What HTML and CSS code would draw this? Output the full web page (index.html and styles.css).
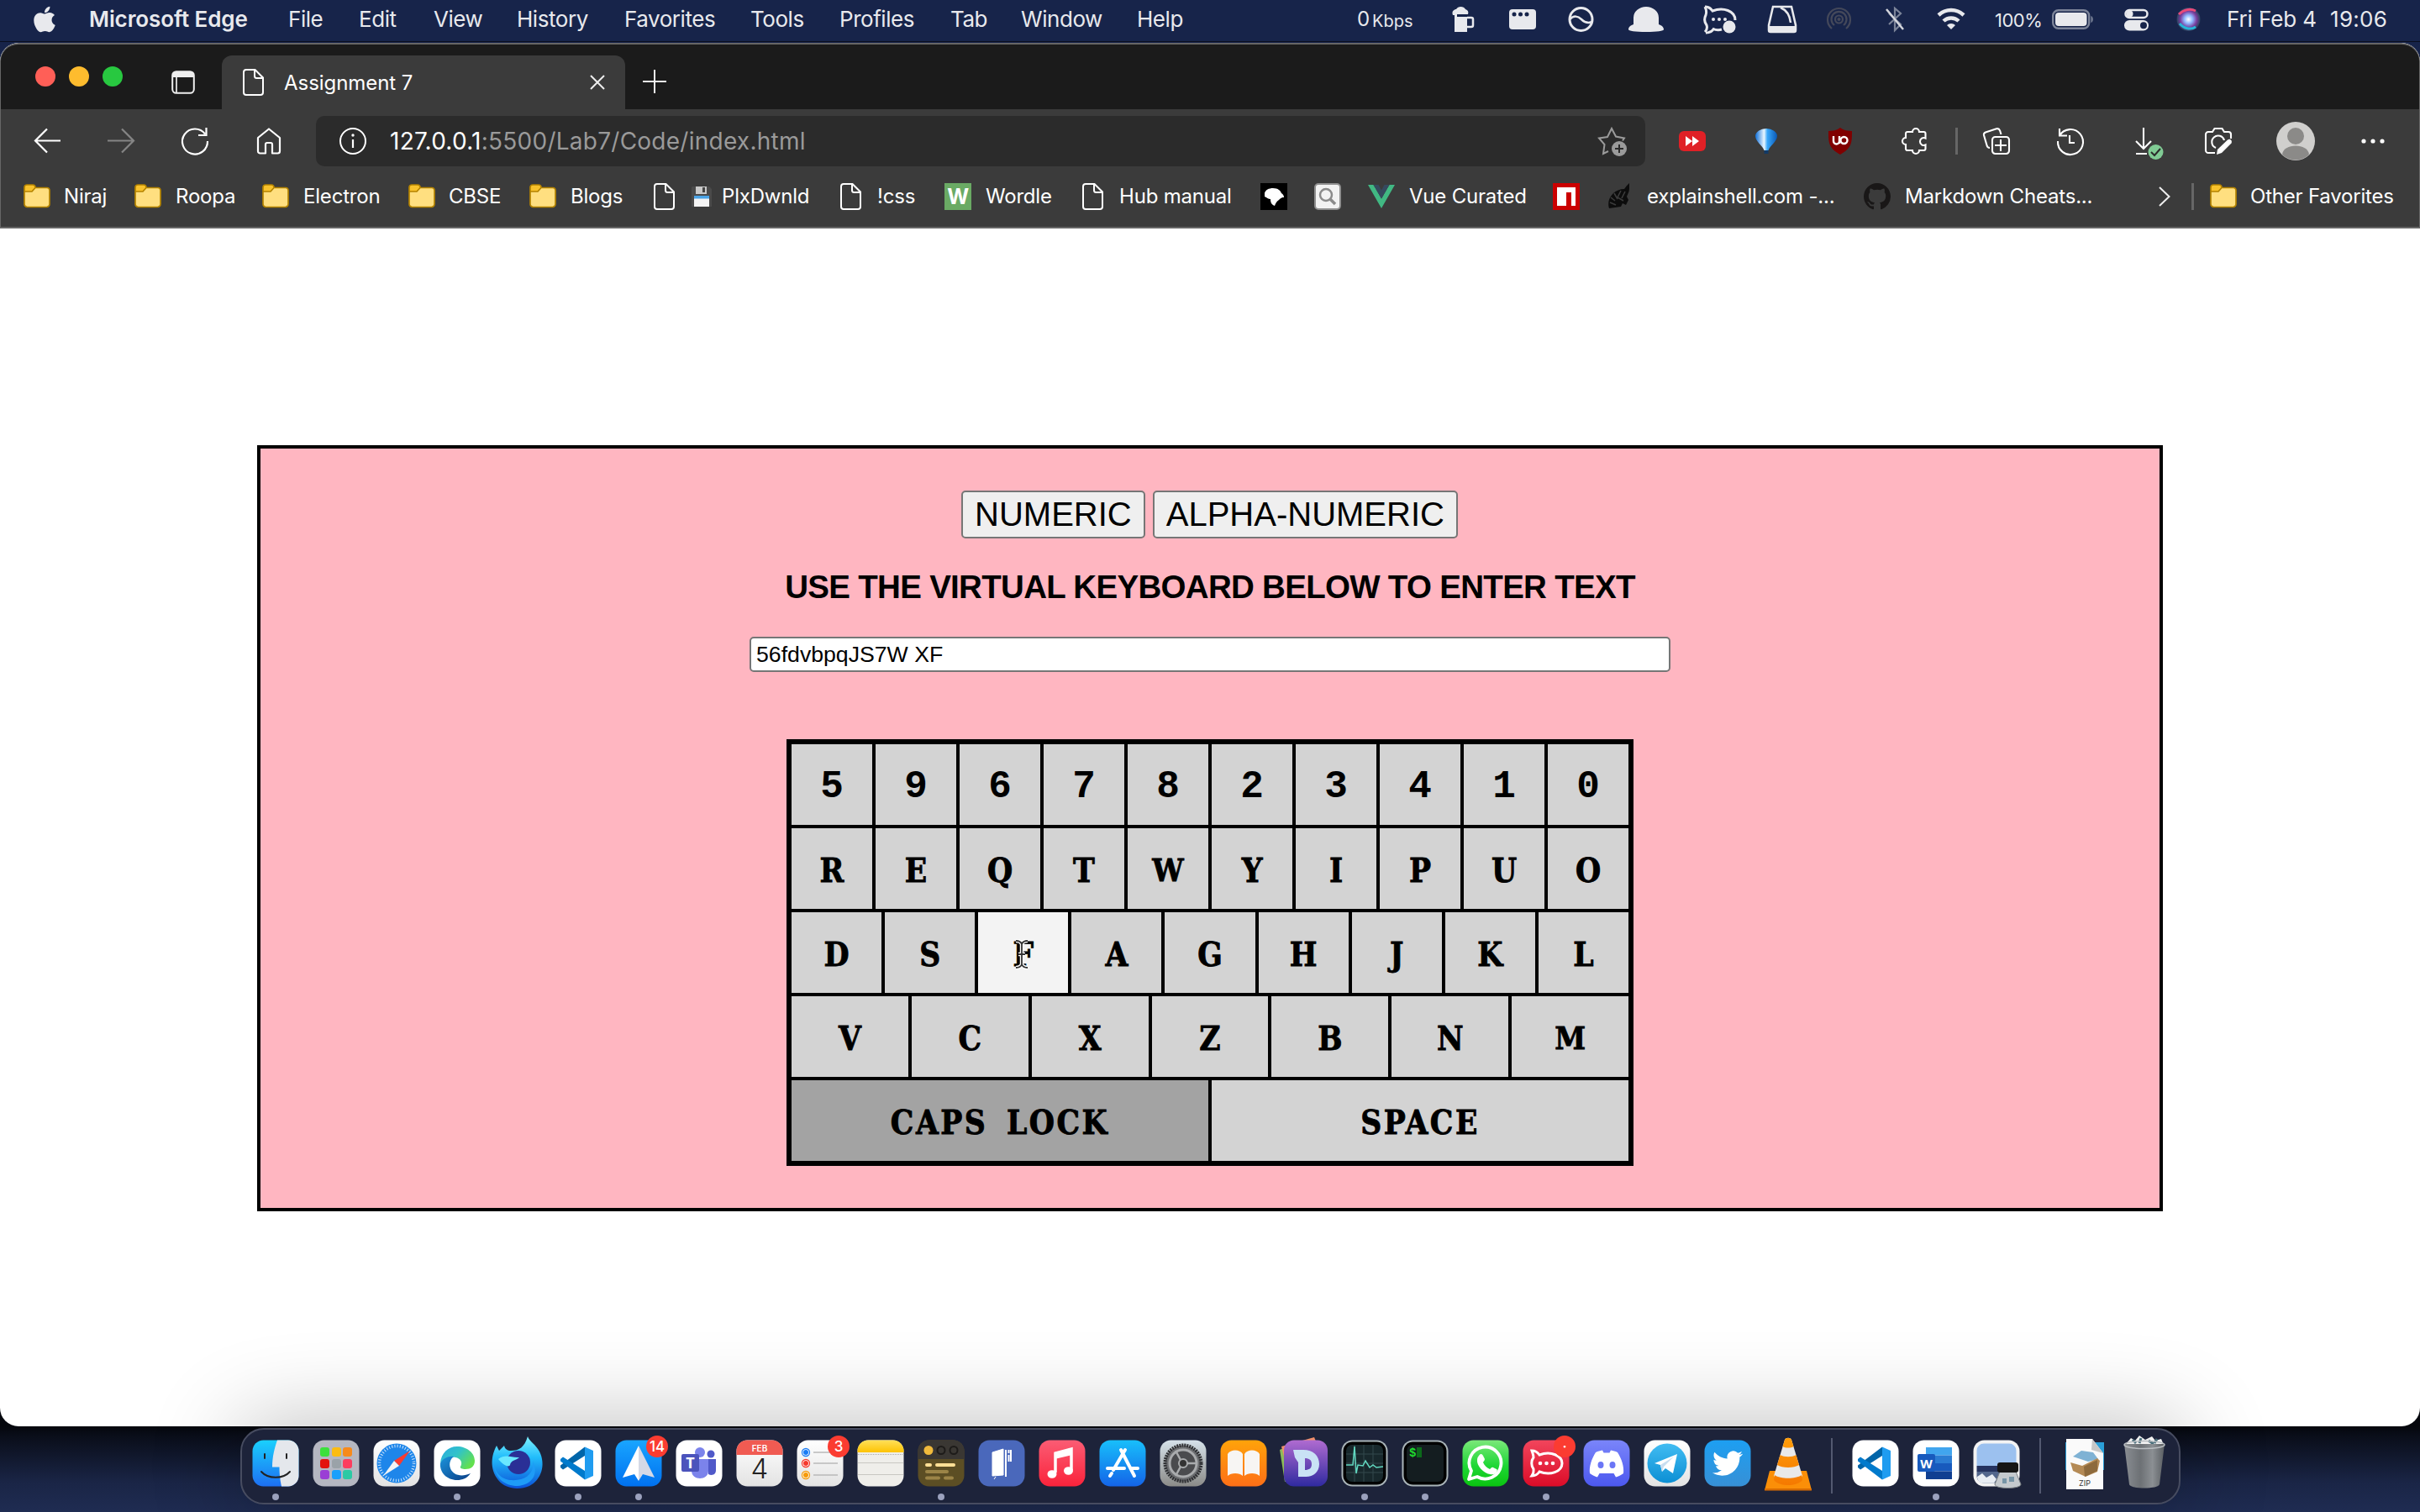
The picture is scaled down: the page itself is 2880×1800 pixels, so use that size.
FILE: index.html
```html
<!DOCTYPE html>
<html lang="en">
<head>
<meta charset="utf-8">
<title>Assignment 7</title>
<link rel="stylesheet" href="styles.css">
</head>
<body>
<svg class="defs" aria-hidden="true">
  <defs>
    <linearGradient id="gBlue" x1="0" y1="0" x2="0" y2="1"><stop offset="0" stop-color="#1ad0fd"/><stop offset="1" stop-color="#1d6ff2"/></linearGradient>
    <linearGradient id="gWhite" x1="0" y1="0" x2="0" y2="1"><stop offset="0" stop-color="#fff"/><stop offset="1" stop-color="#e3e3e3"/></linearGradient>
    <linearGradient id="gSky" x1="0" y1="0" x2="0" y2="1"><stop offset="0" stop-color="#19a5ff"/><stop offset="1" stop-color="#0071f0"/></linearGradient>
    <linearGradient id="gStore" x1="0" y1="0" x2="0" y2="1"><stop offset="0" stop-color="#18bffb"/><stop offset="1" stop-color="#1464e8"/></linearGradient>
    <linearGradient id="gMusic" x1="0" y1="0" x2="0" y2="1"><stop offset="0" stop-color="#fb5c74"/><stop offset="1" stop-color="#fa233b"/></linearGradient>
    <linearGradient id="gBooks" x1="0" y1="0" x2="0" y2="1"><stop offset="0" stop-color="#ffa30a"/><stop offset="1" stop-color="#fd6f17"/></linearGradient>
    <linearGradient id="gDash" x1="0" y1="0" x2="0" y2="1"><stop offset="0" stop-color="#b06bd0"/><stop offset="1" stop-color="#2f2aa0"/></linearGradient>
    <linearGradient id="gGreen" x1="0" y1="0" x2="0" y2="1"><stop offset="0" stop-color="#7be87a"/><stop offset=".55" stop-color="#1fd736"/><stop offset="1" stop-color="#0ac410"/></linearGradient>
    <linearGradient id="gRed" x1="0" y1="0" x2="0" y2="1"><stop offset="0" stop-color="#f2455c"/><stop offset="1" stop-color="#db0c28"/></linearGradient>
    <linearGradient id="gDisc" x1="0" y1="0" x2="0" y2="1"><stop offset="0" stop-color="#7a85fa"/><stop offset="1" stop-color="#4c58ef"/></linearGradient>
    <linearGradient id="gTele" x1="0" y1="0" x2="0" y2="1"><stop offset="0" stop-color="#41bcf2"/><stop offset="1" stop-color="#0c8fd4"/></linearGradient>
    <linearGradient id="gTw" x1="0" y1="0" x2="0" y2="1"><stop offset="0" stop-color="#1d9ff2"/><stop offset="1" stop-color="#3790d6"/></linearGradient>
    <linearGradient id="gNote" x1="0" y1="0" x2="0" y2="1"><stop offset="0" stop-color="#ffe05a"/><stop offset="1" stop-color="#fdc302"/></linearGradient>
    <linearGradient id="gGray" x1="0" y1="0" x2="0" y2="1"><stop offset="0" stop-color="#d6e2ea"/><stop offset="1" stop-color="#8b8b88"/></linearGradient>
    <linearGradient id="gEdge" x1="0" y1="0" x2="1" y2=".6"><stop offset="0" stop-color="#2aa9e0"/><stop offset=".5" stop-color="#31c3c9"/><stop offset="1" stop-color="#63e04e"/></linearGradient>
    <linearGradient id="gEdge2" x1="0" y1="0" x2="1" y2="1"><stop offset="0" stop-color="#1b93dc"/><stop offset="1" stop-color="#0b3f86"/></linearGradient>
    <linearGradient id="gFox" x1="0" y1="0" x2="0" y2="1"><stop offset="0" stop-color="#7ff2ff"/><stop offset=".4" stop-color="#22bdfb"/><stop offset="1" stop-color="#0b52d8"/></linearGradient>
    <linearGradient id="gCone" x1="0" y1="0" x2="0" y2="1"><stop offset="0" stop-color="#ff9d0a"/><stop offset="1" stop-color="#f57900"/></linearGradient>
    <linearGradient id="gBin" x1="0" y1="0" x2="1" y2="0"><stop offset="0" stop-color="#8a8e93"/><stop offset=".4" stop-color="#6d7175"/><stop offset=".7" stop-color="#8b8f93"/><stop offset="1" stop-color="#5a5e62"/></linearGradient>
    <radialGradient id="gSiri"><stop offset="0" stop-color="#fff"/><stop offset=".35" stop-color="#8fb9ff"/><stop offset=".7" stop-color="#7a3c9c"/><stop offset="1" stop-color="#27455f"/></radialGradient>
    <linearGradient id="gBall" x1="0" y1="0" x2="1" y2="0"><stop offset="0" stop-color="#0f6fd8"/><stop offset=".4" stop-color="#e9f6ff"/><stop offset=".55" stop-color="#39a8fb"/><stop offset="1" stop-color="#0a58b5"/></linearGradient>
    <symbol id="tile" viewBox="0 0 56 56"><rect x=".5" y=".5" width="55" height="55" rx="13"/></symbol>
    <symbol id="folder" viewBox="0 0 32 32"><path d="M1 5a3 3 0 0 1 3-3h7a3 3 0 0 1 3 3v3l-3 3H1z" fill="#f8c22c"/><path d="M1 10h9l4-4.500h14a3 3 0 0 1 3 3V25a3.500 3.500 0 0 1-3.500 3.500h-23A3.500 3.500 0 0 1 1 25z" fill="#ffdf80"/><path d="M1 5a3 3 0 0 1 3-3h7a3 3 0 0 1 3 3.500h14a3 3 0 0 1 3 3V25a3.500 3.500 0 0 1-3.500 3.500h-23A3.500 3.500 0 0 1 1 25zM1.500 10h8.500l4-4.500" fill="none" stroke="#b48300" stroke-width="1.700"/></symbol>
    <symbol id="file" viewBox="0 0 32 32"><path d="M4 1h10.500L24 10.500V28a3 3 0 0 1-3 3H4a3 3 0 0 1-3-3V4a3 3 0 0 1 3-3zM14 1v7.500a2.500 2.500 0 0 0 2.500 2.500H24" fill="none" stroke="#fff" stroke-width="2"/></symbol>
    <symbol id="vsc" viewBox="0 0 56 56"><use href="#tile" fill="#fff"/><path d="M10 35.500L7 33v-2.500L36 8.500V19z" fill="#0065a9"/><path d="M10 20.500L7 23v2.500L36 47.500V37z" fill="#007acc"/><path d="M36 8.500l10 4.500v30l-10 4.500z" fill="#1f9cf0"/></symbol>
  </defs>
</svg>

<header class="menubar">
  <svg class="m-apple" viewBox="0 24 384 464"><path d="M318.700 268.700c-.2-36.700 16.400-64.400 50-84.800-18.800-26.900-47.200-41.700-84.700-44.600-35.500-2.800-74.300 20.700-88.500 20.700-15 0-49.400-19.700-76.400-19.700C63.300 141.200 4 184.800 4 273.500q0 39.300 14.400 81.200c12.800 36.700 59 126.700 107.200 125.200 25.200-.6 43-17.900 75.800-17.900 31.800 0 48.300 17.900 76.400 17.900 48.600-.7 90.400-82.500 102.600-119.300-65.200-30.700-61.700-90-61.700-91.900zm-56.600-164.200c27.300-32.400 24.800-61.900 24-72.500-24.100 1.400-52 16.400-67.900 34.900-17.500 19.800-27.800 44.300-25.600 71.900 26.100 2 49.900-11.400 69.500-34.300z" fill="#e8e9ed"/></svg>
  <b>Microsoft Edge</b><span>File</span><span>Edit</span><span>View</span><span>History</span><span>Favorites</span><span>Tools</span><span>Profiles</span><span>Tab</span><span>Window</span><span>Help</span>
  <span class="zero">0</span><span class="kbps">Kbps</span>
  <svg class="mi" viewBox="0 0 32 32"><path d="M1 11C-1 6 3 4 5 4c2-4 9-4 11 0 3 1 4 3 3 6H6v5H3v-4zM3 13h15v18H3z" fill="#e8e9ed"/><path d="M18 14h5a2 2 0 0 1 2 2v7a2 2 0 0 1-2 2h-5" fill="none" stroke="#e8e9ed" stroke-width="2.500"/></svg>
  <svg class="mi" viewBox="0 0 32 32"><rect y="4" width="32" height="24" rx="4" fill="#e8e9ed"/><g fill="#17244a"><circle cx="6" cy="10" r="2.500"/><circle cx="13.500" cy="10" r="2.500"/><circle cx="21" cy="10" r="2.500"/></g></svg>
  <svg class="mi" viewBox="0 0 32 32"><circle cx="15.500" cy="16" r="13.500" fill="none" stroke="#e8e9ed" stroke-width="3"/><path d="M2 16c5-5 10-4 14 0s8 5 13 3" fill="none" stroke="#e8e9ed" stroke-width="2.500"/></svg>
  <svg class="mi mi-wide" viewBox="0 0 42 32"><path d="M6 22V14a15 13 0 0 1 30 0v8c3 1 6 3 6 6 0 2-8 3-21 3S0 30 0 28c0-3 3-5 6-6z" fill="#e8e9ed"/></svg>
  <svg class="mi mi-wide" viewBox="0 0 42 32"><path d="M3 1c4 0 7 2 9 5 13-5 27 0 27 11M4 32c3 0 7-1 9-4M3 1c2 4 2 7 1 10-2 4-2 8 1 12 1 3 0 6-2 8" fill="none" stroke="#e8e9ed" stroke-width="3"/><path d="M12 27c4 2 8 2 11 1" stroke="#e8e9ed" stroke-width="3" fill="none"/><g fill="#e8e9ed"><circle cx="13" cy="16" r="2"/><circle cx="20" cy="16" r="2"/><circle cx="27" cy="16" r="2"/><circle cx="32" cy="25" r="7.500"/></g></svg>
  <svg class="mi mi-wide" viewBox="0 0 42 32"><path d="M6 1h22l5 22v6a2 2 0 0 1-2 2H3a2 2 0 0 1-2-2v-6z" fill="none" stroke="#e8e9ed" stroke-width="2.500"/><path d="M1 24h32v5a2 2 0 0 1-2 2H3a2 2 0 0 1-2-2z" fill="#e8e9ed"/><path d="M15 2c7 3 11 8 12 18" fill="none" stroke="#e8e9ed" stroke-width="2.500"/></svg>
  <svg class="mi" viewBox="0 0 32 32"><g fill="none" stroke="#44485a" stroke-width="2.200"><path d="M6 27a13.500 13.500 0 1 1 17 0"/><path d="M9 23a9 9 0 1 1 11 0"/><circle cx="14.500" cy="16" r="4.500"/></g><circle cx="14.500" cy="16" r="2" fill="#44485a"/></svg>
  <svg class="mi" viewBox="0 0 32 32"><path d="M5 9l14 13-7 7V3l7 6L5 22" fill="none" stroke="#7c8499" stroke-width="2.200"/><path d="M2 4l20 24" stroke="#d4d6dd" stroke-width="2.500"/></svg>
  <svg class="mi mi-wide" viewBox="0 0 42 32"><g fill="none" stroke="#e8e9ed" stroke-width="4.500"><path d="M2 11a22 22 0 0 1 30 0"/><path d="M8 18a13 13 0 0 1 18 0"/></g><path d="M12 23a7 7 0 0 1 10 0l-5 5z" fill="#e8e9ed"/></svg>
  <span class="pct">100%</span>
  <svg class="mi-batt" viewBox="0 0 50 32"><rect x="1.200" y="5.200" width="43" height="21.600" rx="6.500" fill="none" stroke="#7c8499" stroke-width="2.400"/><rect x="4" y="8" width="37.500" height="16" rx="4" fill="#e8e9ed"/><path d="M46.500 12c3 1 3 7 0 8z" fill="#7c8499"/></svg>
  <svg class="mi" viewBox="0 0 32 32"><rect x="1.500" y="5" width="26" height="9" rx="4.500" fill="none" stroke="#e8e9ed" stroke-width="2.500"/><circle cx="6.500" cy="9.500" r="4" fill="#e8e9ed"/><rect x="0" y="17" width="29" height="12.500" rx="6.200" fill="#e8e9ed"/><circle cx="23" cy="23.300" r="4" fill="#17244a"/></svg>
  <svg class="mi" viewBox="0 0 32 32"><circle cx="14.500" cy="16" r="14" fill="url(#gSiri)"/><path d="M3 10c6-6 14-7 20-4" stroke="#e84a7a" stroke-width="3" fill="none"/><path d="M4 21c5 6 13 8 19 4" stroke="#27b6d8" stroke-width="3" fill="none"/></svg>
  <span class="date">Fri Feb 4</span><span class="date clock">19:06</span>
</header>

<main class="window">
  <section class="chrome">
    <div class="tabstrip">
      <div class="lights"><i class="red"></i><i class="yellow"></i><i class="green"></i></div>
      <svg class="tabmenu" viewBox="0 0 28 28"><rect x="1.200" y="1.200" width="25.600" height="25.600" rx="4.500" fill="none" stroke="#eee" stroke-width="2"/><path d="M1 8V5.500A4.500 4.500 0 0 1 5.500 1h17A4.500 4.500 0 0 1 27 5.500V8z" fill="#eee"/><path d="M6 8v19" stroke="#eee" stroke-width="1.700"/></svg>
      <div class="tab">
        <svg class="ic" viewBox="0 0 32 32"><use href="#file"/></svg>
        <span>Assignment 7</span>
        <svg class="close" viewBox="0 0 18 18"><path d="M1 1l16 16M17 1L1 17" stroke="#eee" stroke-width="2"/></svg>
      </div>
      <svg class="plus" viewBox="0 0 28 28"><path d="M14 0v28M0 14h28" stroke="#f2f2f2" stroke-width="2"/></svg>
    </div>
    <div class="toolbar">
      <svg class="ic" viewBox="0 0 32 32"><path d="M32 15.500H2M16 1.500l-14 14 14 14" fill="none" stroke="#fff" stroke-width="2.200"/></svg>
      <svg class="ic" viewBox="0 0 32 32"><path d="M0 15.500h31M17 1.500l14 14-14 14" fill="none" stroke="#858585" stroke-width="2.200"/></svg>
      <svg class="ic" viewBox="0 0 32 32"><path d="M31 16A15 15 0 1 1 28 7.500M29.500 0v9H20" fill="none" stroke="#fff" stroke-width="2.200"/></svg>
      <svg class="ic" viewBox="0 0 32 32"><path d="M3 12L16 1.500 29 12v16a2.500 2.500 0 0 1-2.500 2.500H20V20a2 2 0 0 0-2-2h-4a2 2 0 0 0-2 2v10.500H5.500A2.500 2.500 0 0 1 3 28z" fill="none" stroke="#fff" stroke-width="2.200" stroke-linejoin="round"/></svg>
      <div class="url">
        <svg class="ic" viewBox="0 0 32 32"><circle cx="16" cy="16" r="15" fill="none" stroke="#fff" stroke-width="2"/><path d="M16 14v10" stroke="#fff" stroke-width="2.200"/><circle cx="16" cy="9" r="1.700" fill="#fff"/></svg>
        <span class="addr"><em>127.0.0.1</em>:5500/Lab7/Code/index.html</span>
        <svg class="ic star" viewBox="0 0 32 32"><path d="M12 28l-6 3 1.500-11L1 12.500l10-1.500L16 1l5 9.500 10 2-2 3" fill="none" stroke="#9a9a9a" stroke-width="2"/><circle cx="25" cy="25" r="9" fill="#9a9a9a"/><path d="M25 20v10M20 25h10" stroke="#2b2b2b" stroke-width="2"/></svg>
      </div>
      <svg class="ic" viewBox="0 0 32 32"><rect y="4" width="32" height="24" rx="6" fill="#e02026"/><path d="M8 10l8 6-8 6zM16 10l8 6-8 6z" fill="#fff"/></svg>
      <svg class="ic" viewBox="0 0 32 32"><path d="M3 10a13 9 0 0 1 26 0c0 6-9 12-10.500 17h-5C12 22 3 16 3 10z" fill="url(#gBall)"/><rect x="13.500" y="27" width="5" height="4" fill="#123a66"/></svg>
      <svg class="ic" viewBox="0 0 32 32"><path d="M16 0c4 3 9 4 14 4 0 14 0 20-14 28C2 24 2 18 2 4c5 0 10-1 14-4z" fill="#800000"/><path d="M8 10v6a3.500 3.500 0 0 0 7 0v-6m0 6v3" stroke="#fff" stroke-width="2.400" fill="none"/><circle cx="20.500" cy="15" r="4" stroke="#fff" stroke-width="2.400" fill="none"/></svg>
      <svg class="ic" viewBox="0 0 32 32"><path d="M4 7a2 2 0 0 1 2-2h6a4 4 0 1 1 8 0h5.500a2 2 0 0 1 2 2v5.500a4.500 4.500 0 1 0 0 8V25a2 2 0 0 1-2 2H20a4 4 0 1 1-8 0H6a2 2 0 0 1-2-2v-5a4 4 0 1 1 0-8z" fill="none" stroke="#fff" stroke-width="2.100"/></svg>
      <i class="sep"></i>
      <svg class="ic" viewBox="0 0 32 32"><rect x="11" y="11" width="20" height="20" rx="3.500" fill="none" stroke="#fff" stroke-width="2.100"/><path d="M21 14v14M14 21h14M8 24c-2 0-3-1-3.500-3L1 9c-.4-1.500.3-2.800 2-3.500L16 1.300c2-.6 3.300.2 4 2L21.500 8" fill="none" stroke="#fff" stroke-width="2.100"/></svg>
      <svg class="ic" viewBox="0 0 32 32"><path d="M3 9.500A15 15 0 1 1 1 16M3 1v8.500h9M15 9v9h6" fill="none" stroke="#fff" stroke-width="2.100"/></svg>
      <svg class="ic" viewBox="0 0 32 32"><path d="M9 0v25M0 16l9 9 9-9M0 31h13" fill="none" stroke="#fff" stroke-width="2.100"/><circle cx="23.500" cy="29" r="9" fill="#80cb94"/><path d="M18 29l4 4 7-8" fill="none" stroke="#2b2b2b" stroke-width="2"/></svg>
      <svg class="ic" viewBox="0 0 32 32"><path d="M12 30H4a3 3 0 0 1-3-3V8a3 3 0 0 1 3-3h5l2.500-4h9L23 5h5a3 3 0 0 1 3 3v5M13 24a7.500 7.500 0 1 1 10-9" fill="none" stroke="#fff" stroke-width="2.100"/><path d="M14 32l1-6 12-11.500c3-2 6 1 4.500 4L20 30z" fill="#fff"/></svg>
      <svg class="avatar" viewBox="0 0 46 46"><circle cx="23" cy="23" r="23" fill="#d0cfcd"/><circle cx="23" cy="17" r="10" fill="#8b8a88"/><path d="M7 39c1-14 31-14 32 0a23 23 0 0 1-32 0z" fill="#8b8a88"/></svg>
      <svg class="ic" viewBox="0 0 32 32"><g fill="#fff"><circle cx="5" cy="16" r="2.600"/><circle cx="16" cy="16" r="2.600"/><circle cx="27" cy="16" r="2.600"/></g></svg>
    </div>
    <nav class="bookmarks">
      <svg class="ic" viewBox="0 0 32 32"><use href="#folder"/></svg><span>Niraj</span>
      <svg class="ic" viewBox="0 0 32 32"><use href="#folder"/></svg><span>Roopa</span>
      <svg class="ic" viewBox="0 0 32 32"><use href="#folder"/></svg><span>Electron</span>
      <svg class="ic" viewBox="0 0 32 32"><use href="#folder"/></svg><span>CBSE</span>
      <svg class="ic" viewBox="0 0 32 32"><use href="#folder"/></svg><span>Blogs</span>
      <svg class="ic" viewBox="0 0 32 32"><use href="#file"/></svg>
      <svg class="floppy" viewBox="0 0 24 24"><path d="M1 0h20l3 3v21H0V1z" fill="#4a4a4a"/><rect x="5" y="0" width="13" height="9" fill="#c9c9c9"/><rect x="13" y="1" width="3" height="6" fill="#444"/><rect x="3" y="11" width="18" height="13" fill="#f4f4f4"/><rect x="3" y="11" width="18" height="3.500" fill="#4aa3e6"/></svg><span>PlxDwnld</span>
      <svg class="ic" viewBox="0 0 32 32"><use href="#file"/></svg><span>!css</span>
      <i class="wordle">W</i><span>Wordle</span>
      <svg class="ic" viewBox="0 0 32 32"><use href="#file"/></svg><span>Hub manual</span>
      <svg class="ic" viewBox="0 0 32 32"><rect width="32" height="32" fill="#000"/><path d="M5 12c1-4 5-6 10-6 6 0 9 3 10 6 2 1 3 3 3 5-3 0-4 1-6 3-3 2-4 4-5 7-3-1-5-3-5-8-3 0-4-2-7-3z" fill="#fff"/></svg>
      <svg class="ic" viewBox="0 0 32 32"><rect x="1" y="1" width="30" height="30" rx="4" fill="#f2f2f2" stroke="#8f8f8f" stroke-width="2"/><circle cx="14" cy="14" r="7" fill="none" stroke="#8b8b8b" stroke-width="2.500"/><path d="M19 19l6 6" stroke="#8b8b8b" stroke-width="3.500"/></svg>
      <svg class="ic" viewBox="0 0 32 32"><path d="M0 2h6.500L16 18.500 25.500 2H32L16 30z" fill="#41b883"/><path d="M6.500 2h6L16 8.500 19.500 2h6L16 18.500z" fill="#35495e"/></svg><span>Vue Curated</span>
      <svg class="ic" viewBox="0 0 32 32"><rect width="32" height="32" fill="#cb0000"/><path d="M5 5h22v22h-5V11h-6v16H5z" fill="#fff"/></svg>
      <svg class="ic" viewBox="0 0 32 32"><path d="M1 30c-2-7 0-13 5-18 3-3 8-5 13-5l3-4 3-3v6c0 5-2 7-3 10l2 4-3 6-4-2-2 4z" fill="#0c0c0c"/><path d="M3 17l5 4M7 12l4 7M15 9l-4 8 7 4M2 23l7 3M20 10l-4 8" stroke="#3b3b3b" stroke-width="1.600" fill="none"/></svg><span>explainshell.com -...</span>
      <svg class="ic" viewBox="0 0 16 16"><path d="M8 0C3.580 0 0 3.580 0 8c0 3.540 2.290 6.530 5.470 7.590.4.070.55-.17.55-.38 0-.19-.01-.82-.01-1.490-2.010.37-2.530-.49-2.690-.94-.09-.23-.48-.94-.82-1.130-.28-.15-.68-.52-.01-.53.63-.01 1.080.58 1.230.82.72 1.210 1.870.87 2.330.66.07-.52.28-.87.51-1.070-1.780-.2-3.640-.89-3.640-3.950 0-.87.31-1.590.82-2.150-.08-.2-.36-1.020.08-2.120 0 0 .67-.21 2.200.82.64-.18 1.320-.27 2-.27.68 0 1.360.09 2 .27 1.530-1.040 2.200-.82 2.200-.82.44 1.100.16 1.920.08 2.120.51.56.82 1.270.82 2.150 0 3.070-1.870 3.750-3.650 3.950.29.25.54.73.54 1.480 0 1.070-.01 1.930-.01 2.200 0 .21.15.46.55.38A8.013 8.013 0 0016 8c0-4.420-3.580-8-8-8z" fill="#191717"/></svg><span>Markdown Cheats...</span>
      <svg class="chev" viewBox="0 0 14 24"><path d="M1 1l11.500 11L1 23" fill="none" stroke="#eee" stroke-width="2"/></svg>
      <i class="sep"></i>
      <svg class="ic" viewBox="0 0 32 32"><use href="#folder"/></svg><span>Other Favorites</span>
    </nav>
  </section>

  <section class="page">
    <div class="panel">
      <div class="modes"><button>NUMERIC</button><button>ALPHA-NUMERIC</button></div>
      <h1>USE THE VIRTUAL KEYBOARD BELOW TO ENTER TEXT</h1>
      <input class="entry" value="56fdvbpqJS7W XF">
      <div class="keyboard">
        <div class="row digits"><kbd>5</kbd><kbd>9</kbd><kbd>6</kbd><kbd>7</kbd><kbd>8</kbd><kbd>2</kbd><kbd>3</kbd><kbd>4</kbd><kbd>1</kbd><kbd>0</kbd></div>
        <div class="row"><kbd>R</kbd><kbd>E</kbd><kbd>Q</kbd><kbd>T</kbd><kbd class="wide">W</kbd><kbd>Y</kbd><kbd>I</kbd><kbd>P</kbd><kbd>U</kbd><kbd>O</kbd></div>
        <div class="row"><kbd>D</kbd><kbd>S</kbd><kbd class="hover">F<svg class="cursor" viewBox="0 0 18 36"><path d="M2 2c4 0 6 1 7 4 1-3 3-4 7-4M9 6v24M2 34c4 0 6-1 7-4 1 3 3 4 7 4M5 18h8" fill="none" stroke="#fff" stroke-width="4.500"/><path d="M2 2c4 0 6 1 7 4 1-3 3-4 7-4M9 6v24M2 34c4 0 6-1 7-4 1 3 3 4 7 4M5 18h8" fill="none" stroke="#333" stroke-width="1.800"/></svg></kbd><kbd>A</kbd><kbd>G</kbd><kbd>H</kbd><kbd>J</kbd><kbd>K</kbd><kbd>L</kbd></div>
        <div class="row"><kbd>V</kbd><kbd>C</kbd><kbd>X</kbd><kbd>Z</kbd><kbd>B</kbd><kbd>N</kbd><kbd class="wide">M</kbd></div>
        <div class="row"><kbd class="long caps">CAPS LOCK</kbd><kbd class="long">SPACE</kbd></div>
      </div>
    </div>
  </section>
</main>

<footer class="dock">
  <div class="app run"><svg viewBox="0 0 56 56"><use href="#tile" fill="url(#gBlue)"/><path d="M30 .5h13A12.500 12.500 0 0 1 55.500 13v30A12.500 12.500 0 0 1 43 55.500h-8c-1-5-2.500-12-2.500-23H24C24 20 27 9 30 .5z" fill="#e4e7ec"/><path d="M15 17v5M41 17v5M11 38c8 9 26 9 34 0" stroke="#222" stroke-width="2" fill="none" stroke-linecap="round"/></svg></div>
  <div class="app"><svg viewBox="0 0 56 56"><use href="#tile" fill="#b5b7c1"/><g><rect x="9" y="9" width="11" height="11" rx="3" fill="#3ce03c"/><rect x="23" y="9" width="11" height="11" rx="3" fill="#fcbc12"/><rect x="36" y="9" width="11" height="11" rx="3" fill="#f78a1c"/><rect x="9" y="23" width="11" height="11" rx="3" fill="#e3120d"/><rect x="23" y="23" width="11" height="11" rx="3" fill="#9aa2a8"/><rect x="36" y="23" width="11" height="11" rx="3" fill="#fc3d5f"/><rect x="9" y="36" width="11" height="11" rx="3" fill="#9a3fd5"/><rect x="23" y="36" width="11" height="11" rx="3" fill="#1aa0fb"/><rect x="36" y="36" width="11" height="11" rx="3" fill="#2cc9a4"/></g></svg></div>
  <div class="app"><svg viewBox="0 0 56 56"><use href="#tile" fill="url(#gWhite)"/><circle cx="28" cy="28" r="23.500" fill="#1e86ea"/><circle cx="28" cy="28" r="20.500" fill="none" stroke="#cfe6fb" stroke-width="3.500" stroke-dasharray="1 2.220"/><path d="M44 13L31 31l-6-6z" fill="#fb3b30"/><path d="M12 43l13-18 6 6z" fill="#f3f3f3"/></svg></div>
  <div class="app run"><svg viewBox="0 0 56 56"><use href="#tile" fill="#fff"/><path d="M8 28C9 16 17 8 28 8c12 0 21 8 21 17 0 7-5 10-11 10-4 0-7-1-6-3 3-5 0-10-6-11-8-1-15 3-18 7z" fill="url(#gEdge)"/><path d="M8 28c3-6 10-9 16-8-4 3-6 8-4 14 3 8 13 11 24 6-4 6-10 8-16 8C16 48 7 39 8 28z" fill="url(#gEdge2)"/></svg></div>
  <div class="app"><svg viewBox="0 0 56 56"><path d="M40-4c2 6 10 10 14 18 8 16 2 34-12 41-12 5-28 4-37-7C-6 34-3 18 3 7l3 6 6-6c1 4 4 6 8 6 10 0 16-4 20-17z" fill="url(#gFox)"/><circle cx="29" cy="27" r="14" fill="#2a2f96"/><path d="M5 23c9-7 16-1 25-2-4 4-10 3-11 9-2 4-9-1-14-7z" fill="#6ae8ff"/><path d="M0 30c4 18 20 20 32 17 12-3 16-14 14-22 8 17-2 29-18 30C12 55 1 45 0 30z" fill="#1e9cf6"/></svg></div>
  <div class="app run"><svg viewBox="0 0 56 56"><use href="#vsc"/></svg></div>
  <div class="app run"><svg viewBox="0 0 56 56"><use href="#tile" fill="url(#gSky)"/><path d="M28 7l19 38-14-4-5 8z" fill="#d5d9e6"/><path d="M28 7L9 45l14-4 5 8z" fill="#fff"/></svg><b class="badge">14</b></div>
  <div class="app"><svg viewBox="0 0 56 56"><use href="#tile" fill="#fff"/><circle cx="42" cy="17" r="4.500" fill="#5059c9"/><path d="M38 23h10v13c0 6-5 7-9 5z" fill="#5059c9"/><circle cx="29" cy="15" r="6" fill="#7b83eb"/><path d="M19 23h20v14c0 12-20 12-20 0z" fill="#7b83eb"/><rect x="7" y="17" width="21" height="21" rx="2" fill="#4b53bc"/><text x="17.500" y="34" class="t-teams">T</text></svg></div>
  <div class="app"><svg viewBox="0 0 56 56"><use href="#tile" fill="url(#gWhite)"/><path d="M.5 18v-5A12.500 12.500 0 0 1 13 .5h30A12.500 12.500 0 0 1 55.500 13v5z" fill="#f05b52"/><text x="28" y="14" class="t-feb">FEB</text><text x="28" y="46" class="t-day">4</text></svg></div>
  <div class="app"><svg viewBox="0 0 56 56"><use href="#tile" fill="url(#gWhite)"/><path d="M20 15h29M20 28h29M20 42h29" stroke="#b9b9b9" stroke-width="1.300"/><g stroke-width="1.300" fill="#fff"><circle cx="11" cy="15" r="4.500" stroke="#1a7cf5"/><circle cx="11" cy="28" r="4.500" stroke="#f5382c"/><circle cx="11" cy="42" r="4.500" stroke="#f59a0a"/></g><circle cx="11" cy="15" r="3" fill="#1a7cf5"/><circle cx="11" cy="28" r="3" fill="#f5382c"/><circle cx="11" cy="42" r="3" fill="#f59a0a"/></svg><b class="badge">3</b></div>
  <div class="app"><svg viewBox="0 0 56 56"><use href="#tile" fill="#efeeea"/><path d="M.5 15v-2A12.500 12.500 0 0 1 13 .5h30A12.500 12.500 0 0 1 55.500 13v2z" fill="url(#gNote)"/><path d="M1 27.500h54M1 41.500h54" stroke="#c8c7c2"/><path d="M1 17.500h54" stroke="#aaa" stroke-dasharray="1 1"/></svg></div>
  <div class="app run"><svg viewBox="0 0 56 56"><use href="#tile" fill="#5c4e24"/><path d="M.5 23V13A12.500 12.500 0 0 1 13 .5h30A12.500 12.500 0 0 1 55.500 13v10z" fill="#3a3733"/><circle cx="13" cy="12.500" r="5.500" fill="#f0ba3c"/><circle cx="28" cy="12.500" r="4.500" fill="none" stroke="#1d1b19" stroke-width="2"/><circle cx="43" cy="12.500" r="4.500" fill="none" stroke="#1d1b19" stroke-width="2"/><g fill="#9b8447"><rect x="9" y="28" width="8" height="4" rx="2" fill="#ffdf96"/><rect x="21" y="28" width="24" height="4" rx="2" fill="#ffdf96"/><rect x="9" y="36" width="28" height="4" rx="2"/><rect x="9" y="43.500" width="18" height="4" rx="2"/><rect x="31" y="43.500" width="12" height="4" rx="2"/></g></svg></div>
  <div class="app"><svg viewBox="0 0 56 56"><use href="#tile" fill="#4a68bb"/><path d="M17 15l13-4v31l-13 1zM21 44l-2 3" fill="#fff" stroke="#fff"/><path d="M33 12v32M36.500 12v4M36.500 18v8M39 12v14" stroke="#fff" stroke-width="2"/></svg></div>
  <div class="app"><svg viewBox="0 0 56 56"><use href="#tile" fill="url(#gMusic)"/><path d="M20 39V16l19-5v25" fill="none" stroke="#fff" stroke-width="3.500"/><path d="M19 15l21-5v8l-21 5z" fill="#fff"/><ellipse cx="16" cy="41" rx="5.500" ry="4.800" fill="#fff"/><ellipse cx="35.500" cy="37" rx="5.500" ry="4.800" fill="#fff"/></svg></div>
  <div class="app"><svg viewBox="0 0 56 56"><use href="#tile" fill="url(#gStore)"/><path d="M31 12L17 36M13 43l2-3M26 12l16 31M10 34h20M38 34h8" stroke="#fff" stroke-width="4" stroke-linecap="round"/></svg></div>
  <div class="app"><svg viewBox="0 0 56 56"><use href="#tile" fill="url(#gGray)"/><circle cx="28" cy="28" r="21.500" fill="#6d6f72" stroke="#2f3033" stroke-width="4" stroke-dasharray="2 1"/><circle cx="28" cy="28" r="16" fill="#4a4b4e" stroke="#a9abad" stroke-width="3"/><circle cx="28" cy="28" r="5" fill="#333" stroke="#a9abad" stroke-width="2"/><path d="M33 28h12M25 24l-6-11M25 32l-6 11" stroke="#a9abad" stroke-width="2.500"/></svg></div>
  <div class="app"><svg viewBox="0 0 56 56"><use href="#tile" fill="url(#gBooks)"/><path d="M27 43c-4-4-14-4-18 0V17c3-6 15-6 18 0zM29 43c4-4 14-4 18 0V17c-3-6-15-6-18 0z" fill="#f7f5f3"/></svg></div>
  <div class="app"><svg viewBox="0 0 56 56"><path d="M-1 12l6 38 20-6L16 4z" fill="#8ebb5a"/><path d="M1 8L40-3l5 12L12 52z" fill="#f0906a"/><rect x="4" y=".5" width="52" height="55" rx="12" fill="url(#gDash)"/><path fill-rule="evenodd" d="M15 12h12c12 0 19 7 19 17s-8 16-18 15h-7V27l-4-6zM29 22v14c5 0 8-2 8-7s-3-7-8-7z" fill="#c9e2f5"/></svg></div>
  <div class="app run"><svg viewBox="0 0 56 56"><use href="#tile" fill="#a9b4b8"/><rect x="2.500" y="2.500" width="51" height="51" rx="11" fill="#000"/><rect x="6" y="6" width="44" height="44" rx="7" fill="#18282c"/><path d="M16 6v44M27 6v44M38 6v44M6 17h44M6 28h44M6 39h44" stroke="#33484c"/><path d="M6 30h8l2-22 2 32 2-10 6 1 3-6 5 8 4-3 4 3 8-1" fill="none" stroke="#62d8c0" stroke-width="1.500"/></svg></div>
  <div class="app run"><svg viewBox="0 0 56 56"><use href="#tile" fill="#a9b4b8"/><rect x="2.500" y="2.500" width="51" height="51" rx="11" fill="#000"/><rect x="6" y="6" width="44" height="44" rx="7" fill="#141d20"/><text x="9" y="20" class="t-term">$</text><rect x="18" y="9" width="6" height="12" fill="#0b6a1a"/></svg></div>
  <div class="app"><svg viewBox="0 0 56 56"><use href="#tile" fill="url(#gGreen)"/><path d="M8 47l3-10a19 19 0 1 1 7 7z" fill="none" stroke="#fff" stroke-width="3.800" stroke-linejoin="round"/><path d="M20 19c2-3 4-2 5 0l2 4c0 2-2 3-2 4 2 4 4 6 8 8 1 0 2-3 4-2l4 2c2 1 0 5-3 6-9 2-20-8-20-16 0-2 0-4 2-6z" fill="#fff"/></svg></div>
  <div class="app run"><svg viewBox="0 0 56 56"><use href="#tile" fill="url(#gRed)"/><path d="M11 13c4 0 7 2 9 5 14-5 27 1 27 10 0 10-14 15-27 10-2 3-5 5-9 5 3-4 2-6 2-8-3-4-3-10 0-14 0-3-1-5-2-8z" fill="none" stroke="#fff" stroke-width="3"/><g fill="#fff"><circle cx="21" cy="28" r="2.300"/><circle cx="28.500" cy="28" r="2.300"/><circle cx="36" cy="28" r="2.300"/></g></svg><b class="badge">·</b></div>
  <div class="app"><svg viewBox="0 0 56 56"><use href="#tile" fill="url(#gDisc)"/><path d="M15 15c3-1.500 5-2 8-2.500l1.500 3h7l1.500-3c3 .5 5 1 8 2.500 5 8 8 17 7 25-3 2-6 4-9 4.500l-2.500-4.500h-17L17 44.500c-3-.5-6-2.500-9-4.500-1-8 2-17 7-25z" fill="#fff"/><ellipse cx="21" cy="30" rx="3.500" ry="4" fill="#6b76f6"/><ellipse cx="35" cy="30" rx="3.500" ry="4" fill="#6b76f6"/></svg></div>
  <div class="app"><svg viewBox="0 0 56 56"><use href="#tile" fill="url(#gWhite)"/><circle cx="28" cy="28" r="23.500" fill="url(#gTele)"/><path d="M13 28l27-11-5 23-9-6-4 4-2-8z" fill="#fff"/><path d="M20 30l16-10-12 12-2 6z" fill="#c9def0"/></svg></div>
  <div class="app"><svg viewBox="0 0 56 56"><use href="#tile" fill="url(#gTw)"/><path transform="translate(10 10) scale(1.500)" d="M23.953 4.570a10 10 0 01-2.825.775 4.958 4.958 0 002.163-2.723c-.951.555-2.005.959-3.127 1.184a4.920 4.920 0 00-8.384 4.482C7.690 8.095 4.067 6.130 1.640 3.162a4.822 4.822 0 00-.666 2.475c0 1.710.87 3.213 2.188 4.096a4.904 4.904 0 01-2.228-.616v.06a4.923 4.923 0 003.946 4.827 4.996 4.996 0 01-2.212.085 4.936 4.936 0 004.604 3.417 9.867 9.867 0 01-6.102 2.105c-.39 0-.779-.023-1.170-.067a13.995 13.995 0 007.557 2.209c9.053 0 13.998-7.496 13.998-13.985 0-.21 0-.42-.015-.63A9.935 9.935 0 0024 4.590z" fill="#fff"/></svg></div>
  <div class="app"><svg viewBox="0 0 56 56"><path d="M6 37h44l6 23H0z" fill="#fb8f08"/><path d="M0 58h56v2.500H0z" fill="#d96d00"/><path d="M24 0c1-3 7-3 8 0l13 43c-6 8-28 8-34 0z" fill="#e9e9e9"/><path d="M24 0c1-3 7-3 8 0l2.500 8c-3 2-10 2-13 0zM18.500 18c5 3 14 3 19 0l3.500 12c-6 4-20 4-26 0zM12 42c7 5 25 5 32 0l1 6c-7 8-27 8-34 0z" fill="url(#gCone)"/></svg></div>
  <i class="divider"></i>
  <div class="app"><svg viewBox="0 0 56 56"><use href="#vsc"/></svg></div>
  <div class="app run"><svg viewBox="0 0 56 56"><use href="#tile" fill="#fff"/><path d="M16 9h31v9.500H16z" fill="#41a5ee"/><path d="M16 18.500h31V28H16z" fill="#2b7cd3"/><path d="M16 28h31v9.500H16z" fill="#185abd"/><path d="M16 37.500h31V47H16z" fill="#103f91"/><rect x="6" y="17" width="21" height="21" rx="2" fill="#185abd"/><text x="16.500" y="33.500" class="t-word">W</text></svg></div>
  <div class="app"><svg viewBox="0 0 56 56"><use href="#tile" fill="#f3f3f3"/><path d="M4.500 31V13A8.500 8.500 0 0 1 13 4.500h30A8.500 8.500 0 0 1 51.500 13v18z" fill="#9cc1ef"/><path d="M4.500 31h47v7h-47z" fill="#25335f"/><path d="M4.500 38h47v6A8 8 0 0 1 43 51.500H13A8 8 0 0 1 4.500 44z" fill="#52668c"/><path d="M5 44l6-4 5 5 7-4 5 6-3 4.500H12c-4 0-7-3-7-7.500z" fill="#e8edf3"/><path d="M32 38h19l6 15c0 6-31 6-31 0z" fill="#c4c9cd" stroke="#7a7f83"/><rect x="29" y="27" width="25" height="12" rx="3" fill="#151515"/><path d="M35 46h5v6h-5zM43 44h6v6h-6z" fill="#7795a6"/></svg></div>
  <i class="divider"></i>
  <div class="app"><svg viewBox="0 0 56 56"><path d="M6 3h46v33H6z" fill="#2a9fd8"/><path d="M7-1h31l13 17v43H7z" fill="#fafafa"/><path d="M38-1l13 17-14-4z" fill="#c7c7c7"/><path d="M15 20l10-7 14 2 6 8-12 3z" fill="#7fb2d4"/><path d="M12 27l14 4 18-9 3 3-3 13-14 6-15-7z" fill="#b48a55"/><path d="M28 32l16-8v13l-15 7z" fill="#8d6a3d"/><text x="29" y="55" class="t-zip">ZIP</text></svg></div>
  <div class="app"><svg viewBox="0 0 56 56"><path d="M6 5l6-7 5 3 5-6 7 5 8-4 4 5 7-2 3 7z" fill="#f1f1f1"/><path d="M14 0l4 4M24-2l-2 6M33 1l6 4M43-1l-3 5" stroke="#4a6f7c" stroke-width="3"/><path d="M4 5h48l-6 48c-1 6-35 6-36 0z" fill="url(#gBin)"/><ellipse cx="28" cy="6" rx="24" ry="4.500" fill="none" stroke="#b9bdc1" stroke-width="1.500"/></svg></div>
</footer>
</body>
</html>
```
FILE: styles.css
```css
* { box-sizing: border-box; }

body {
  margin: 0;
  width: 2880px;
  height: 1800px;
  overflow: hidden;
  position: relative;
  display: flex;
  flex-direction: column;
  font-family: Inter, "Liberation Sans", sans-serif;
  background: linear-gradient(#17244a 0, #17244a 51px, #05070d 1698px, #0a0e1a 1710px, #1a2546 1765px, #1f2c52 1800px);
}

svg { display: block; overflow: visible; }
.defs { position: absolute; width: 0; height: 0; }

/* menu bar */
.menubar {
  flex: none;
  height: 50px;
  padding: 0 0 4px 40px;
  display: grid;
  grid-template-columns: 66px 237px 84px 89px 99px 128px 150px 106px 132px 84px 138px 262px 18px 95px 68px 70px 72px 88px 78px 70px 69px 62px 69px 68px 86px 62px 60px 123px auto;
  align-items: center;
  color: #e8e9ed;
  font-size: 26px;
  letter-spacing: -0.45px;
  white-space: nowrap;
  border-bottom: 1px solid #0a0f1f;
}
.menubar b { font-weight: 600; letter-spacing: -0.1px; }
.m-apple { width: 26px; height: 32px; }
.mi { width: 32px; height: 32px; }
.mi-wide { width: 42px; }
.mi-batt { width: 50px; height: 32px; }
.menubar .zero { font-size: 24px; }
.menubar .kbps { font-size: 20px; padding-top: 4px; letter-spacing: 0; }
.menubar .pct { font-size: 22px; padding-top: 3px; letter-spacing: -0.5px; }
.menubar .date { letter-spacing: -0.1px; }
.menubar .clock { letter-spacing: 0.3px; }

/* browser window */
.window {
  flex: none;
  margin-top: 1px;
  height: 1647px;
  background: #fff;
  border-radius: 22px;
  overflow: hidden;
}
.chrome {
  height: 221px;
  border: solid #666;
  border-width: 2px 1px;
  border-radius: 22px 22px 0 0;
  background: #3b3b3b;
  overflow: hidden;
  color: #fff;
}
.tabstrip {
  height: 77px;
  background: #1b1b1b;
  display: flex;
}
.lights { display: flex; gap: 16px; margin: 26px 0 0 41px; width: 162px; }
.lights i { width: 24px; height: 24px; border-radius: 50%; }
.red { background: #ff5f57; }
.yellow { background: #febc2e; }
.green { background: #28c840; }
.tabmenu { width: 28px; height: 28px; margin: 31px 32px 0 0; }
.tab {
  width: 480px;
  height: 64px;
  margin-top: 13px;
  padding: 0 24px 0 25px;
  display: flex;
  align-items: center;
  background: #3b3b3b;
  border-radius: 12px 12px 0 0;
  font-size: 24px;
}
.tab span { flex: 1; margin-left: 17px; letter-spacing: -0.05px; }
.close { width: 18px; height: 18px; }
.plus { width: 28px; height: 28px; margin: 30px 0 0 21px; }
.ic { width: 32px; height: 32px; }
.toolbar {
  height: 76px;
  padding-left: 39px;
  display: grid;
  grid-template-columns: 88px 88px 88px 72px 1622px 88px 88px 90px 63px 33px 88px 94px 82px 85px 99px auto;
  align-items: center;
}
.url {
  width: 1582px;
  height: 60px;
  border-radius: 10px;
  background: #2b2b2b;
  padding: 0 24px 0 28px;
  display: flex;
  align-items: center;
}
.addr { flex: 1; margin-left: 28px; font-size: 28px; color: #9a9a9a; letter-spacing: 0.25px; }
.addr em { font-style: normal; color: #fff; }
.avatar { width: 46px; height: 46px; }
.sep { width: 3px; height: 32px; background: #666; }
.bookmarks {
  height: 55px;
  padding-left: 27px;
  display: grid;
  grid-template-columns: 48px 84px 49px 103px 49px 125px 48px 96px 49px 99px 45px 36px 141px 44px 80px 49px 115px 44px 168px 64px 64px 49px 171px 66px 46px 258px 49px 302px 39px 22px 48px auto;
  align-items: center;
  font-size: 24px;
  letter-spacing: -0.2px;
  white-space: nowrap;
}
.floppy { width: 24px; height: 24px; }
.chev { width: 14px; height: 24px; }
.wordle {
  width: 32px;
  height: 32px;
  background: #6aaa64;
  font: bold 25px/32px Inter, sans-serif;
  text-align: center;
}

/* page */
.page { display: flex; justify-content: center; padding-top: 258px; }
.panel {
  width: 2268px;
  height: 912px;
  border: 4px solid #000;
  background: #ffb6c1;
  display: flex;
  flex-direction: column;
  align-items: center;
  padding-top: 50px;
  font-family: "Liberation Sans", Arial, sans-serif;
  color: #000;
}
.modes { display: flex; gap: 9px; margin-left: -1px; }
.modes button {
  height: 57px;
  padding: 0 14px;
  border: 2px solid #767676;
  border-radius: 5px;
  background: #efefef;
  font: 40px "Liberation Sans", Arial, sans-serif;
  color: #000;
}
.panel h1 { margin: 35px 0 0; font-size: 38.500px; line-height: 46px; letter-spacing: -0.7px; white-space: nowrap; }
.entry {
  width: 1096px;
  height: 42px;
  margin-top: 36px;
  padding: 0 6px;
  border: 2px solid #767676;
  border-radius: 5px;
  background: #fff;
  font: 26.667px "Liberation Sans", Arial, sans-serif;
  color: #000;
}
.keyboard { margin-top: 80px; width: 1008px; border: 4px solid #000; }
.row { display: flex; height: 100px; }
.row kbd {
  flex: 1 1 0;
  padding-top: 4px;
  border: 2px solid #000;
  background: #d3d3d3;
  display: flex;
  align-items: center;
  justify-content: center;
  position: relative;
  font: bold 38.500px "DejaVu Serif Condensed", "DejaVu Serif", serif;
  font-stretch: condensed;
  -webkit-text-stroke: 0.8px #000;
  white-space: pre;
}
.row.digits kbd { font: bold 46px "Liberation Mono", monospace; padding-top: 6px; -webkit-text-stroke: 0; }
.row kbd.wide { font-size: 37px; letter-spacing: 0; }
.row kbd.long { letter-spacing: 2.500px; word-spacing: 8px; }
.row kbd.hover { background: #f3f3f3; }
.row kbd.caps { background: #a3a3a3; }
.cursor { position: absolute; left: 43px; top: 32px; width: 18px; height: 36px; }

/* dock */
.dock {
  position: absolute;
  left: 286px;
  top: 1700px;
  width: 2309px;
  height: 91px;
  padding: 12px 0 0 4px;
  display: flex;
  background: #1d233a;
  border: 2px solid #474c60;
  border-radius: 28px;
  box-shadow: 0 0 110px rgba(0, 0, 0, 0.3);
}
.app {
  position: relative;
  width: 72px;
  flex: none;
  display: flex;
  flex-direction: column;
  align-items: center;
  gap: 8px;
}
.app svg { width: 56px; height: 56px; flex: none; }
.run::after { content: ""; width: 8px; height: 8px; border-radius: 50%; background: #9ba1bd; }
.badge {
  position: absolute;
  right: 1px;
  top: -5px;
  width: 26px;
  height: 26px;
  border-radius: 50%;
  background: #fb3c31;
  color: #fff;
  font: 500 17px/26px Inter, sans-serif;
  text-align: center;
}
.divider { flex: none; width: 2px; height: 66px; margin: -2px 15px 0; background: #535970; }
.t-teams { font: bold 18px "Open Sans", sans-serif; fill: #fff; text-anchor: middle; }
.t-word { font: bold 15px "Open Sans", sans-serif; fill: #fff; text-anchor: middle; }
.t-feb { font: 600 10px Inter, sans-serif; fill: #fff; text-anchor: middle; }
.t-day { font: 300 33px Inter, sans-serif; fill: #222; text-anchor: middle; }
.t-term { font: bold 14px "Liberation Mono", monospace; fill: #1fdc2e; }
.t-zip { font: 9px Inter, sans-serif; fill: #333; text-anchor: middle; }
```
